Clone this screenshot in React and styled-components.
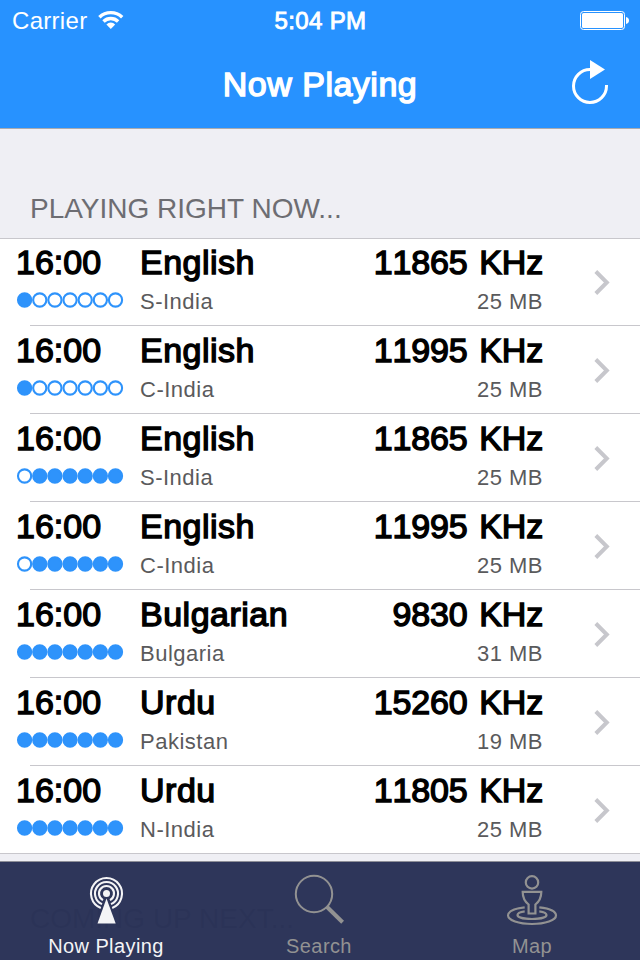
import * as React from "react";
import styled, { createGlobalStyle, css } from "styled-components";

const GlobalStyle = createGlobalStyle`
    body {
        margin: 0;
        background-color: #efeff4;
        font-family: "Liberation Sans", Arial, sans-serif;
    }
`;

// styles
const semiBold = css`
    -webkit-text-stroke: ${(props) => props.$stroke || "1.4px"} currentColor;
`;

const Screen = styled.div`
    position: relative;
    width: 640px;
    height: 960px;
    overflow: hidden;
    background-color: #efeff4;
`;

const Header = styled.header`
    box-sizing: border-box;
    height: 129px;
    color: #fff;
    background-color: #2792ff;
    border-bottom: 1px solid #a9abb0;
`;

const StatusBar = styled.div`
    display: grid;
    grid-template-columns: 1fr auto 1fr;
    align-items: center;
    height: 40px;
    padding: 0 11px 0 12px;
    font-size: 24px;
    line-height: 42px;
`;

const Carrier = styled.div`
    display: flex;
    align-items: center;
    gap: 10px;
    letter-spacing: 0.3px;
`;

const WifiIcon = styled.svg`
    margin: 0 0 2px 1px;
`;

const Clock = styled.div`
    ${semiBold}
    letter-spacing: 0.35px;
`;

const BatteryIcon = styled.svg`
    justify-self: end;
    margin-bottom: 2px;
`;

const NavBar = styled.nav`
    display: grid;
    grid-template-columns: 1fr auto 1fr;
    align-items: center;
    height: 88px;
    padding: 0 30px;
`;

const Title = styled.h1`
    ${semiBold}
    grid-column: 2;
    margin: 0;
    font-size: 34px;
    font-weight: 400;
    line-height: 88px;
    letter-spacing: 0.5px;
`;

const RefreshButton = styled.button`
    justify-self: end;
    display: flex;
    padding: 0;
    border: 0;
    color: inherit;
    background: none;
`;

const SectionTitle = styled.h2`
    box-sizing: border-box;
    height: ${(props) => props.$height};
    margin: 0;
    padding: ${(props) => props.$top} 30px 0;
    color: #6d6d72;
    font-size: 28px;
    font-weight: 400;
    line-height: 32px;
`;

const List = styled.ul`
    margin: 0;
    padding: 0;
    list-style: none;
    background-color: #fff;
    border-top: 1px solid #c8c7cc;
    border-bottom: 1px solid #c8c7cc;
`;

const Row = styled.li`
    display: grid;
    grid-template-columns: 124px 1fr 204px 67px;
    height: 86px;
    padding: 0 30px 0 16px;

    & + & {
        padding-top: 2px;
        background: linear-gradient(#c8c7cc, #c8c7cc) 30px 0 / 100% 1px no-repeat;
    }
`;

const Cell = styled.div`
    display: flex;
    flex-direction: column;
    text-align: ${(props) => props.$align || "left"};
`;

const Main = styled.span`
    ${semiBold}
    height: 46px;
    font-size: 34px;
    line-height: 47px;
    letter-spacing: ${(props) => props.$spacing || "0"};
    word-spacing: 2.5px;
    font-kerning: none;
    white-space: nowrap;
`;

const Detail = styled.span`
    color: #5a5a5c;
    font-size: 22px;
    line-height: 33px;
    letter-spacing: 0.5px;
`;

const Days = styled.svg`
    margin-top: 7px;
`;

const Chevron = styled.svg`
    align-self: center;
    justify-self: end;
`;

const TabBar = styled.footer`
    position: absolute;
    right: 0;
    bottom: 0;
    left: 0;
    box-sizing: border-box;
    display: grid;
    grid-template-columns: 212px 214px 212px;
    height: 99px;
    background-color: rgba(42, 50, 87, 0.98);
    border-top: 1px solid #8e8f98;
`;

const Tab = styled.div`
    display: flex;
    flex-direction: column;
    align-items: center;
    padding-top: 9px;
    color: ${(props) => (props.$active ? "#f4f4f6" : "#929292")};
    font-size: 20px;
    line-height: 24px;
    letter-spacing: 0.4px;
`;

const TabIcon = styled.svg`
    width: 60px;
    height: 60px;
    margin-bottom: 3px;
`;

const broadcasts = [
    { time: "16:00", language: "English", khz: 11865, area: "S-India", mb: 25, days: "1000000" },
    { time: "16:00", language: "English", khz: 11995, area: "C-India", mb: 25, days: "1000000" },
    { time: "16:00", language: "English", khz: 11865, area: "S-India", mb: 25, days: "0111111" },
    { time: "16:00", language: "English", khz: 11995, area: "C-India", mb: 25, days: "0111111" },
    { time: "16:00", language: "Bulgarian", khz: 9830, area: "Bulgaria", mb: 31, days: "1111111" },
    { time: "16:00", language: "Urdu", khz: 15260, area: "Pakistan", mb: 19, days: "1111111" },
    { time: "16:00", language: "Urdu", khz: 11805, area: "N-India", mb: 25, days: "1111111" },
];

// one dot per weekday, filled when the broadcast airs
const WeekDots = ({ days }) => (
    <Days width="108" height="16" viewBox="0 0 108 16">
        {days.split("").map((day, i) => (
            <circle
                key={i}
                cx={8.6 + i * 15.15}
                cy="8"
                r="6.6"
                fill={day === "1" ? "#2e93fb" : "#fff"}
                stroke="#2e93fb"
                strokeWidth="2.1"
            />
        ))}
    </Days>
);

const Broadcast = ({ item }) => (
    <Row>
        <Cell>
            <Main>{item.time}</Main>
            <WeekDots days={item.days} />
        </Cell>
        <Cell>
            <Main $spacing="0.5px">{item.language}</Main>
            <Detail>{item.area}</Detail>
        </Cell>
        <Cell $align="right">
            <Main $spacing="-0.15px">{item.khz} KHz</Main>
            <Detail>{item.mb} MB</Detail>
        </Cell>
        <Chevron width="17" height="28" viewBox="0 0 17 28">
            <path d="M2.8 3.5 13.8 14.5 2.8 25.5" fill="none" stroke="#c7c7cc" strokeWidth="4" />
        </Chevron>
    </Row>
);

// markup
const App = () => {
    return (
        <Screen>
            <GlobalStyle />
            <Header>
                <StatusBar>
                    <Carrier>
                        Carrier
                        <WifiIcon width="26" height="20" viewBox="0 0 26 20" fill="none" stroke="#fff" strokeWidth="3.4">
                            <path d="M1.4 7.2a16.4 16.4 0 0 1 22.8 0" />
                            <path d="M5.5 11.5a10.4 10.4 0 0 1 14.6 0" />
                            <path d="M8.4 14.4a6.2 6.2 0 0 1 8.8 0L12.8 19z" fill="#fff" stroke="none" />
                        </WifiIcon>
                    </Carrier>
                    <Clock $stroke="0.9px">5:04 PM</Clock>
                    <BatteryIcon width="49" height="20" viewBox="0 0 49 20">
                        <rect x="0.5" y="1.5" width="44" height="18" rx="3" fill="none" stroke="#fff" />
                        <rect x="2" y="3" width="41" height="15" rx="1.6" fill="#fff" />
                        <path d="M46 7c4 .5 4 6.5 0 7z" fill="#fff" />
                    </BatteryIcon>
                </StatusBar>
                <NavBar>
                    <Title>Now Playing</Title>
                    <RefreshButton aria-label="Refresh">
                        <svg width="40" height="48" viewBox="0 0 40 48">
                            <path d="M20 9.5A16.5 16.5 0 1 0 36.5 26V25" fill="none" stroke="#fff" strokeWidth="3" />
                            <path d="M20 0v19l15-9.5z" fill="#fff" />
                        </svg>
                    </RefreshButton>
                </NavBar>
            </Header>
            <SectionTitle $height="109px" $top="64px">
                PLAYING RIGHT NOW...
            </SectionTitle>
            <List>
                {broadcasts.map((item, i) => (
                    <Broadcast key={i} item={item} />
                ))}
            </List>
            <SectionTitle $height="106px" $top="49px">
                COMING UP NEXT...
            </SectionTitle>
            <TabBar>
                <Tab $active>
                    <TabIcon viewBox="0 0 60 60" fill="none" stroke="currentColor" strokeWidth="2.1">
                        <path d="M24.8 36.9A15.5 15.5 0 1 1 36.2 36.9" />
                        <path d="M26 33.1A11.5 11.5 0 1 1 35 33.1" />
                        <path d="M27 29.1A7.5 7.5 0 1 1 34 29.1" />
                        <circle cx="30.5" cy="22.5" r="3.5" fill="currentColor" stroke="none" />
                        <path d="M30.5 27.5 39.7 52.5H21.5z" fill="currentColor" stroke="none" />
                    </TabIcon>
                    Now Playing
                </Tab>
                <Tab>
                    <TabIcon viewBox="0 0 60 60" fill="none" stroke="currentColor">
                        <circle cx="25" cy="23" r="18.2" strokeWidth="2" />
                        <path d="M37.8 35.8 53.6 51.2" strokeWidth="4" />
                    </TabIcon>
                    Search
                </Tab>
                <Tab>
                    <TabIcon viewBox="0 0 60 60" fill="none" stroke="currentColor" strokeWidth="2.2">
                        <circle cx="30" cy="11.4" r="6.2" />
                        <path d="M20.7 20.9H39.3C39.3 27 37.2 30.4 33.4 33.5V42.5H26.6V33.5C22.8 30.4 20.7 27 20.7 20.9z" />
                        <path d="M22.7 36.4C12 37.6 6 40.5 6 44.6C6 49.3 16.7 53 30 53S54 49.3 54 44.6C54 40.5 48 37.6 37.3 36.4" />
                        <path d="M22.7 40.3C18 41 15.5 42.5 15.5 44C15.5 46.4 22 48 30 48S44.5 46.4 44.5 44C44.5 42.5 42 41 37.3 40.3" />
                    </TabIcon>
                    Map
                </Tab>
            </TabBar>
        </Screen>
    );
};

export default App;
